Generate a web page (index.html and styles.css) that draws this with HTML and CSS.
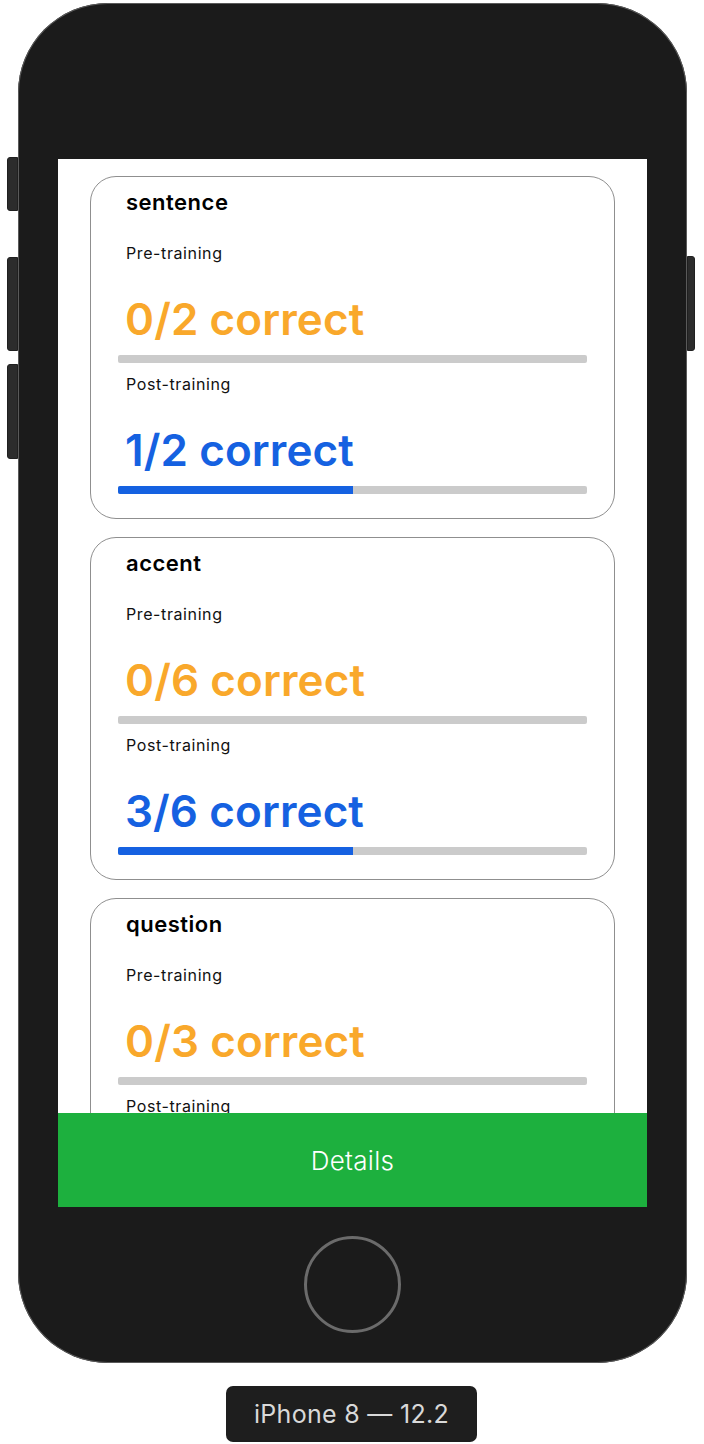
FILE: index.html
```html
<!DOCTYPE html>
<html lang="en">
<head>
<meta charset="utf-8">
<title>iPhone 8 — 12.2</title>
<link rel="stylesheet" href="styles.css">
</head>
<body>
<div class="stage">
  <div class="phone">
    <span class="side-btn mute"></span>
    <span class="side-btn vol-up"></span>
    <span class="side-btn vol-down"></span>
    <span class="side-btn power"></span>
    <div class="screen">
      <div class="scroll">
        <section class="card">
          <h2 class="card-title">sentence</h2>
          <div class="label">Pre-training</div>
          <div class="score pre">0/2 correct</div>
          <div class="bar"><div class="fill pre-fill" style="width:0%"></div></div>
          <div class="label label-post">Post-training</div>
          <div class="score post">1/2 correct</div>
          <div class="bar"><div class="fill post-fill" style="width:50%"></div></div>
        </section>
        <section class="card">
          <h2 class="card-title">accent</h2>
          <div class="label">Pre-training</div>
          <div class="score pre">0/6 correct</div>
          <div class="bar"><div class="fill pre-fill" style="width:0%"></div></div>
          <div class="label label-post">Post-training</div>
          <div class="score post">3/6 correct</div>
          <div class="bar"><div class="fill post-fill" style="width:50%"></div></div>
        </section>
        <section class="card">
          <h2 class="card-title">question</h2>
          <div class="label">Pre-training</div>
          <div class="score pre">0/3 correct</div>
          <div class="bar"><div class="fill pre-fill" style="width:0%"></div></div>
          <div class="label label-post">Post-training</div>
          <div class="score post">1/3 correct</div>
          <div class="bar"><div class="fill post-fill" style="width:33%"></div></div>
        </section>
      </div>
      <button class="details-btn" type="button">Details</button>
    </div>
    <div class="home-btn"></div>
  </div>
  <div class="device-label">iPhone 8 — 12.2</div>
</div>
</body>
</html>
```

FILE: styles.css
```css
* { box-sizing: border-box; }

html, body {
  margin: 0;
  padding: 0;
  background: #ffffff;
}

body {
  font-family: Inter, "Noto Sans", "Liberation Sans", sans-serif;
  width: 704px;
  height: 1444px;
  overflow: hidden;
}

.stage {
  display: flex;
  flex-direction: column;
  align-items: flex-start;
  padding-top: 3px;
}

.phone {
  position: relative;
  margin-left: 18px;
  width: 669px;
  height: 1360px;
  background: #1b1b1b;
  border-radius: 90px;
  box-shadow: 0 0 0 1px #5a5a5a inset;
  display: flex;
  flex-direction: column;
  align-items: center;
  padding-top: 156px;
}

.side-btn {
  position: absolute;
  background: #2c2c2c;
  border: 1px solid #202020;
}

.mute { left: -11px; top: 154px; width: 11px; height: 54px; border-radius: 3px 0 0 3px; }
.vol-up { left: -11px; top: 254px; width: 11px; height: 94px; border-radius: 3px 0 0 3px; }
.vol-down { left: -11px; top: 361px; width: 11px; height: 95px; border-radius: 3px 0 0 3px; }
.power { right: -8px; top: 253px; width: 8px; height: 95px; border-radius: 0 3px 3px 0; }

.screen {
  width: 589px;
  height: 1048px;
  background: #ffffff;
  display: flex;
  flex-direction: column;
  overflow: hidden;
}

.scroll {
  flex: 1;
  overflow: hidden;
  padding-top: 17px;
  display: flex;
  flex-direction: column;
  align-items: center;
  gap: 18px;
}

.card {
  flex: none;
  width: 525px;
  border: 1px solid #8f8f8f;
  border-radius: 26px;
  padding: 12px 27px 24px;
  display: flex;
  flex-direction: column;
}

.card-title {
  margin: 0;
  padding-left: 8px;
  font-size: 22px;
  line-height: 26px;
  font-weight: 600;
  letter-spacing: 0.5px;
  color: #000000;
}

.label {
  margin-top: 28px;
  padding-left: 8px;
  font-size: 16px;
  line-height: 20px;
  font-weight: 400;
  letter-spacing: 0.6px;
  color: #111111;
}

.label-post { margin-top: 11px; }

.score {
  margin-top: 30px;
  padding-left: 7px;
  font-size: 44px;
  line-height: 52px;
  font-weight: 600;
  letter-spacing: 0.1px;
}

.score.pre { color: #f9a82b; }
.score.post { color: #1561e1; }

.bar {
  margin-top: 10px;
  height: 8px;
  background: #cbcbcb;
  border-radius: 2px;
  overflow: hidden;
}

.fill { height: 100%; }
.pre-fill { background: #f9a82b; }
.post-fill { background: #1561e1; }

.details-btn {
  flex: none;
  height: 94px;
  width: 100%;
  border: 0;
  margin: 0;
  background: #1db03e;
  color: #ffffff;
  font-family: Inter, "Noto Sans", "Liberation Sans", sans-serif;
  font-size: 26px;
  font-weight: 300;
  letter-spacing: 0.3px;
  padding: 0;
}

.home-btn {
  margin-top: 29px;
  width: 97px;
  height: 97px;
  border-radius: 50%;
  border: 3px solid #6b6b6b;
}

.device-label {
  margin-top: 23px;
  margin-left: 226px;
  width: 251px;
  height: 56px;
  border-radius: 7px;
  background: #1e1e1e;
  color: #d9d9d9;
  font-size: 25px;
  font-weight: 400;
  letter-spacing: 0.3px;
  display: flex;
  align-items: center;
  justify-content: center;
}
```
